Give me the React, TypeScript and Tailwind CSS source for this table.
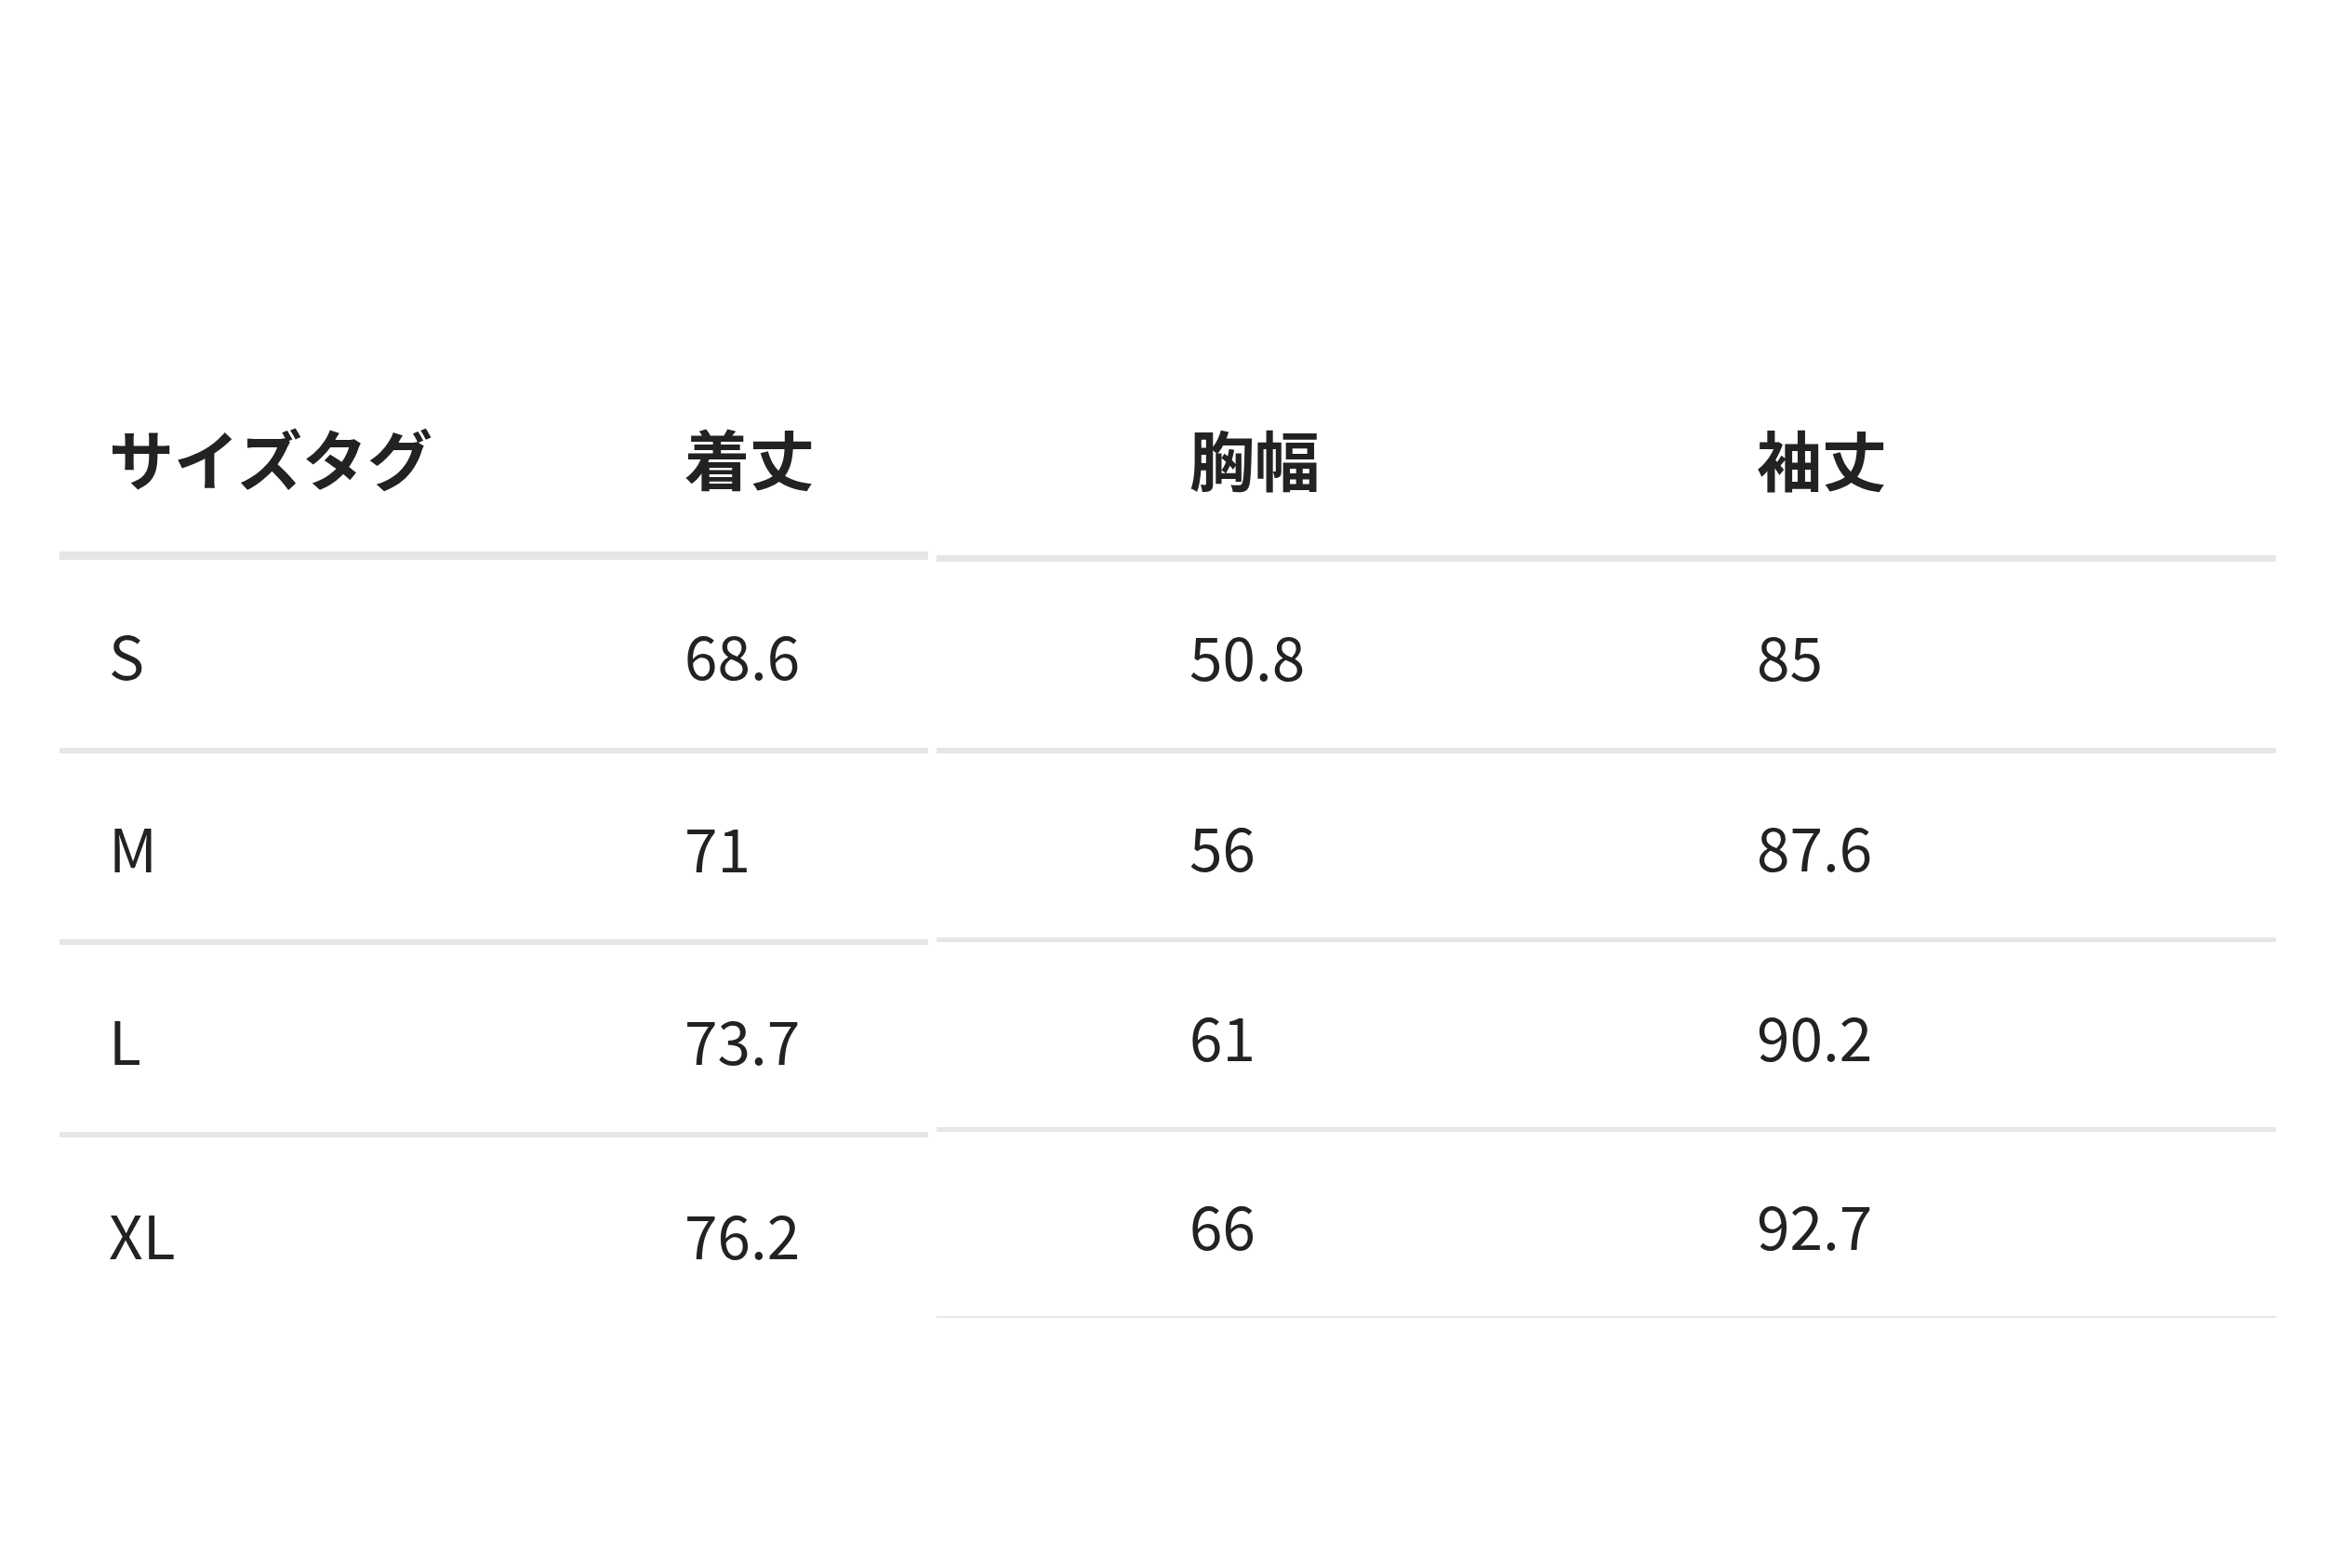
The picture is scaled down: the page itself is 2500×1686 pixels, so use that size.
import React from "react";

const leftRows = [
  ["S", "68.6", "h-[208px]", "border-b-[6px]"],
  ["M", "71", "h-[206px]", "border-b-[6px]"],
  ["L", "73.7", "h-[207px]", "border-b-[6px]"],
  ["XL", "76.2", "h-[206px]", "border-b-0"],
];

const rightRows = [
  ["50.8", "85", "h-[206px]", "border-b-[6px]"],
  ["56", "87.6", "h-[203px]", "border-b-[5px]"],
  ["61", "90.2", "h-[204px]", "border-b-[5px]"],
  ["66", "92.7", "h-[200px]", "border-b-2"],
];

export default function App() {
  return (
    <div className="w-[2500px] h-[1686px] bg-white flex items-start pl-[64px] pt-[380px] font-['Noto_Sans_CJK_JP','Noto_Sans',sans-serif] text-[#222222]">
      <div className="w-[934px] flex flex-col">
        <div className="h-[222px] flex items-center pt-[10px] border-b-[9px] border-[#e6e6e6] text-[70px] font-bold leading-none">
          <div className="w-[672px] shrink-0 pl-[53px]">サイズタグ</div>
          <div>着丈</div>
        </div>
        {leftRows.map(([a, b, h, bb]) => (
          <div key={a} className={`${h} ${bb} flex items-center border-[#e6e6e6] text-[64px] leading-none`}>
            <div className="w-[672px] shrink-0 pl-[53px]">{a}</div>
            <div>{b}</div>
          </div>
        ))}
      </div>
      <div className="ml-[9px] w-[1440px] flex flex-col">
        <div className="h-[224px] flex items-center pt-[8px] border-b-[7px] border-[#e6e6e6] text-[70px] font-bold leading-none">
          <div className="w-[882px] shrink-0 pl-[272px]">胸幅</div>
          <div>袖丈</div>
        </div>
        {rightRows.map(([a, b, h, bb]) => (
          <div key={a} className={`${h} ${bb} flex items-center border-[#e6e6e6] text-[64px] leading-none`}>
            <div className="w-[882px] shrink-0 pl-[272px]">{a}</div>
            <div>{b}</div>
          </div>
        ))}
      </div>
    </div>
  );
}
